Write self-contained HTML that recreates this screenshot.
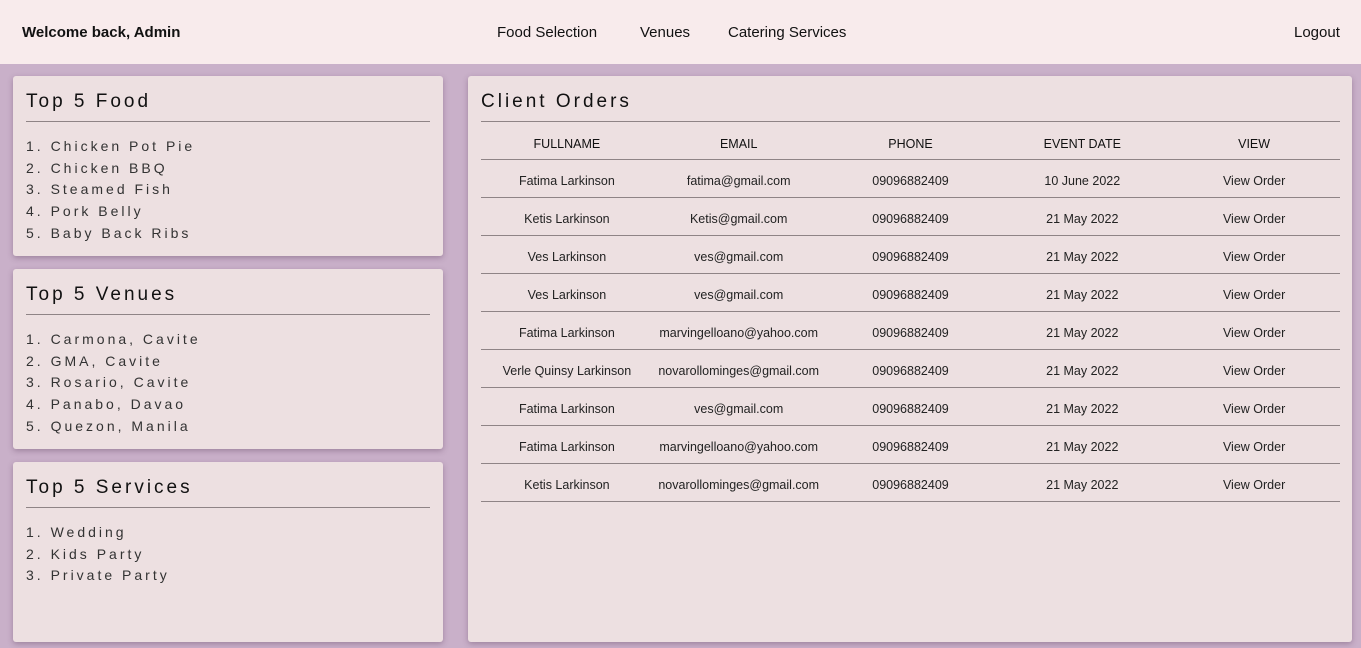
<!DOCTYPE html>
<html><head><style>
*{margin:0;padding:0;box-sizing:border-box}
body{width:1361px;height:648px;background:#c9b0c9;font-family:"Liberation Sans",sans-serif;color:#111;position:relative;overflow:hidden}
.hdr{position:absolute;left:0;top:0;width:1361px;height:64px;background:#f8ebec}
.hdr span{position:absolute;top:24px;font-size:15px}
.card{position:absolute;background:#ede0e1;border-radius:3px;box-shadow:0 2px 6px rgba(80,50,80,.35)}
.card h2{position:absolute;left:13px;top:15px;font-size:19px;font-weight:normal;letter-spacing:3px;color:#111}
.card hr{position:absolute;left:13px;right:13px;top:45px;border:0;border-top:1px solid #8f8486}
.list{position:absolute;left:13px;top:60px;font-size:14px;letter-spacing:3px;line-height:21.7px;color:#333}
table{position:absolute;left:13px;top:46px;width:859px;border-collapse:collapse;font-size:12.5px;text-align:center}
td,th{border-bottom:1px solid #8f8486;height:38px;width:20%;color:#222;padding-top:6px}
th{font-weight:normal;height:37px;font-size:12.5px;color:#111;padding-top:8px}
</style></head><body>
<div class="hdr">
<span style="left:22px;font-weight:bold">Welcome back, Admin</span>
<span style="left:497px">Food Selection</span>
<span style="left:640px">Venues</span>
<span style="left:728px">Catering Services</span>
<span style="left:1294px">Logout</span>
</div>
<div class="card" style="left:13px;top:76px;width:430px;height:180px"><h2>Top 5 Food</h2><hr><div class="list">1. Chicken Pot Pie<br>2. Chicken BBQ<br>3. Steamed Fish<br>4. Pork Belly<br>5. Baby Back Ribs</div></div>
<div class="card" style="left:13px;top:269px;width:430px;height:180px"><h2>Top 5 Venues</h2><hr><div class="list">1. Carmona, Cavite<br>2. GMA, Cavite<br>3. Rosario, Cavite<br>4. Panabo, Davao<br>5. Quezon, Manila</div></div>
<div class="card" style="left:13px;top:462px;width:430px;height:180px"><h2>Top 5 Services</h2><hr><div class="list">1. Wedding<br>2. Kids Party<br>3. Private Party</div></div>
<div class="card" style="left:468px;top:76px;width:884px;height:566px"><h2>Client Orders</h2><hr style="right:12px">
<table>
<tr><th>FULLNAME</th><th>EMAIL</th><th>PHONE</th><th>EVENT DATE</th><th>VIEW</th></tr>
<tr><td>Fatima Larkinson</td><td>fatima@gmail.com</td><td>09096882409</td><td>10 June 2022</td><td>View Order</td></tr>
<tr><td>Ketis Larkinson</td><td>Ketis@gmail.com</td><td>09096882409</td><td>21 May 2022</td><td>View Order</td></tr>
<tr><td>Ves Larkinson</td><td>ves@gmail.com</td><td>09096882409</td><td>21 May 2022</td><td>View Order</td></tr>
<tr><td>Ves Larkinson</td><td>ves@gmail.com</td><td>09096882409</td><td>21 May 2022</td><td>View Order</td></tr>
<tr><td>Fatima Larkinson</td><td>marvingelloano@yahoo.com</td><td>09096882409</td><td>21 May 2022</td><td>View Order</td></tr>
<tr><td>Verle Quinsy Larkinson</td><td>novarollominges@gmail.com</td><td>09096882409</td><td>21 May 2022</td><td>View Order</td></tr>
<tr><td>Fatima Larkinson</td><td>ves@gmail.com</td><td>09096882409</td><td>21 May 2022</td><td>View Order</td></tr>
<tr><td>Fatima Larkinson</td><td>marvingelloano@yahoo.com</td><td>09096882409</td><td>21 May 2022</td><td>View Order</td></tr>
<tr><td>Ketis Larkinson</td><td>novarollominges@gmail.com</td><td>09096882409</td><td>21 May 2022</td><td>View Order</td></tr>
</table></div>
</body></html>
